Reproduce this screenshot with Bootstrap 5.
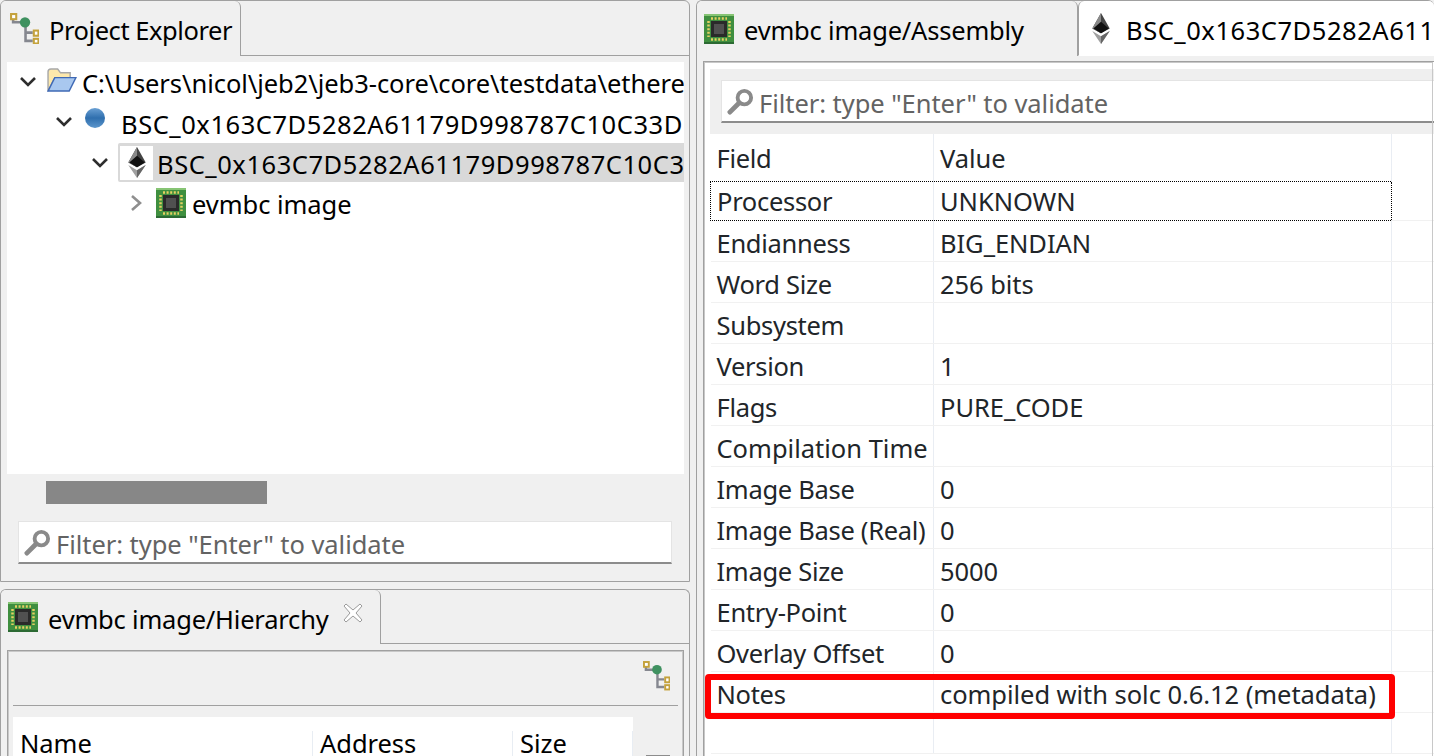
<!DOCTYPE html>
<html lang="en"><head><meta charset="utf-8"><title>JEB</title>
<link rel="stylesheet" href="https://cdn.jsdelivr.net/npm/bootstrap@5.3.0/dist/css/bootstrap.min.css">
<style>
html,body{height:756px;overflow:hidden}
body{font-family:"Noto Sans","Open Sans",sans-serif;font-size:25.5px;letter-spacing:-.05px;background:#f0f0f0;color:#000;line-height:1}
.shell{width:1434px;height:756px;overflow:hidden}
.leftcol{width:690px;flex:none}
.rightcol{width:738px;margin-left:6px;flex:none;overflow:hidden;height:756px}
.pane{border:1px solid #a0a0a0;border-radius:6px 6px 0 0;background:#f0f0f0;overflow:hidden}
.pane-top{height:582px}
.pane-low{height:167px;margin-top:7px;border-bottom:0}
.strip{height:55px;flex:none;border-bottom:1px solid #a0a0a0}
.pane-low .strip{height:54px}
.tabx{height:calc(100% + 1px);margin-bottom:-1px;border-right:1px solid #a0a0a0;background:#f0f0f0;border-radius:0 6px 0 0;white-space:nowrap;flex:none}
.tabx>span{padding-top:5px}
.tabx.act{background:#fff;border-bottom:1px solid #fff;border-radius:6px 6px 0 0;border-left:1px solid #a0a0a0;border-right:0}
.t1{width:240px;padding-left:9px;gap:10px}
.t1>span{letter-spacing:-.45px}
.t2{width:380px;padding-left:7px;gap:10px}
.t2>span,.t3>span{letter-spacing:-.2px}
.t3{width:381px;padding-left:7px;gap:10px}
.t4{width:360px;padding-left:12px;gap:15px;flex:none}
.hash{letter-spacing:.55px}
.body-top{padding:6px 5px 4px 6px;height:526px}
.treebox{background:#fff;height:412px;overflow:hidden;flex:none}
.trow{height:40.25px;white-space:nowrap;flex:none}
.trow span{padding-top:4px}
.r1{padding-left:12px;gap:9px}
.r1 .lbl{margin-left:-4px}
.folder{margin-bottom:4px}
.r2{padding-left:48px;gap:11px}
.r3{padding-left:84px}
.sel{background:#d9d9d9;border-radius:2px 0 0 2px;flex:1;height:39px;padding-left:2px;overflow:hidden;margin-left:9px}
.iconbox{background:#fff;width:33px;height:34px;flex:none;margin-right:4px}
.r4{padding-left:122px;gap:11px}
.r4 .chipi{margin-left:2px}
.r4 span{margin-left:-5px}
.hbar{height:36px;flex:none;padding:7px 0 0 39px}
.thumb{width:221px;height:23px;background:#878787}
.filter{background:#fff;border-bottom:2px solid #8c8c8c;border-top:1px solid #e4e4e4;border-left:1px solid #e4e4e4;border-right:1px solid #e4e4e4;height:43px;color:#636363;padding-left:5px;gap:5px;white-space:nowrap;overflow:hidden}
.filter span{padding-top:5px}
.fl{margin:11px 12px 0 11px}
.inner-low{margin:6px 5px 0 6px;border:1px solid #a0a0a0;height:120px;padding:0 5px;outline:1px solid #c8c8c8;outline-offset:-2px}
.tbar{height:55px;border-bottom:1px solid #a0a0a0;padding:9px 0 0 0;justify-content:flex-end}
.lowrow{margin-top:11px}
.hrow{background:#fff;height:40px;width:620px;padding-top:14px}
.hc{border-right:1px solid #e8edf3;height:100%;padding-left:7px;white-space:nowrap;flex:none}
.col-a{width:300px}.col-b{width:200px}.col-c{width:120px}
.sbarrow{width:24px;height:2px;background:#8c8c8c;margin:38px 0 0 13px;flex:none}
.inner-right{margin:5px 0 0 6px;border:1px solid #a0a0a0;outline:1px solid #c8c8c8;outline-offset:-2px;border-right:0;padding:7px 0 0 6px;background:#fff;height:700px;position:relative}
.fbar{background:#efefef;height:65px;padding:11px 0 10px 11px}
.fbar .filter{height:43px;padding-left:5px;border-right:0}
.ptable{width:726px;table-layout:fixed;margin:0;--bs-table-bg:transparent;border-collapse:collapse}
.ptable td{height:41px;padding:6px 0 0 6px;border:0;border-right:1px solid #e9edf3;border-bottom:1px solid #f1f1f1;vertical-align:middle;white-space:nowrap;line-height:1;box-shadow:none;overflow:hidden}
.ptable td:first-child{letter-spacing:-.3px}
.ptable td.plain{letter-spacing:0}
.ptable td:nth-child(3){border-right:0}
.ptable tr.hd td{height:47px;border-bottom:0;padding-top:3px}
.ptable tr.focusrow td{height:39px;padding-top:3px;border-top:1px dotted #000;border-bottom:1px dotted #000}
.ptable tr.focusrow td:first-child{border-left:1px dotted #000}
.ptable tr.focusrow td:nth-child(2){border-right:1px dotted #000}
.ptable tr.focusrow td:nth-child(3){border-top:0;border-bottom:1px solid #f1f1f1}
.c1{width:223px}.c2{width:458px}.c3{width:45px}
.redmark{position:absolute;left:1px;top:612px;width:690px;height:45px;border:6px solid #f00;border-radius:4px;pointer-events:none}
svg{flex:none;display:block}
.soft{filter:blur(.5px)}
</style></head><body>
<svg width="0" height="0" style="position:absolute"><defs>
<symbol id="chip" viewBox="0 0 30 30"><rect width="30" height="30" fill="#3f8f3f"/><rect width="30" height="2" fill="#86c474"/><rect y="28" width="30" height="2" fill="#2c6a33"/><path d="M7 4.500h16M7 25.500h16M4.500 7v16M25.500 7v16" stroke="#e6cf62" stroke-width="2.500" stroke-dasharray="2 1.600"/><rect x="7" y="7" width="16" height="16" fill="#2a2a2a"/><rect x="10" y="10" width="10" height="10" fill="#505050"/></symbol>
<symbol id="eth" viewBox="0 0 20 32"><path d="M10 0 19 16 10 21 1 16Z" fill="#444"/><path d="M10 0 1 16 10 21Z" fill="#8a8a8a"/><path d="M1 18.500 10 24 19 18.500 10 32Z" fill="#a0a0a0"/><path d="M10 24 19 18.500 10 32Z" fill="#666"/><path d="M10 9 18 16 10 21 2 16Z" fill="#111"/></symbol>
<symbol id="tree" viewBox="0 0 28 30"><path d="M3 6V9H14M15 9V27H22M15 19H22" fill="none" stroke="#85878f" stroke-width="2.500"/><rect x="1" y="1" width="5" height="5" fill="#fff" stroke="#c4a23c" stroke-width="2"/><rect x="23" y="17" width="4.500" height="5" fill="#fff" stroke="#c4a23c" stroke-width="2"/><rect x="23" y="25" width="4.500" height="4.500" fill="#fff" stroke="#c4a23c" stroke-width="2"/><circle cx="14.500" cy="9" r="5" fill="#3f9160"/></symbol>
<symbol id="lens" viewBox="0 0 28 28"><path d="M3 25 13 15" stroke="#8a8a8a" stroke-width="5" stroke-linecap="round"/><circle cx="18" cy="10" r="7" fill="#fff" stroke="#8a8a8a" stroke-width="4"/></symbol>
<symbol id="down" viewBox="0 0 18 12"><path d="M2 2 9 9 16 2" fill="none" stroke="#2e2e2e" stroke-width="2.600"/></symbol>
</defs></svg>
<div class="shell d-flex">
 <div class="leftcol d-flex flex-column">
  <div class="pane pane-top d-flex flex-column">
   <div class="strip d-flex">
    <div class="tabx t1 d-flex align-items-center"><svg width="29" height="31"><use href="#tree"/></svg><span>Project Explorer</span></div>
   </div>
   <div class="body-top d-flex flex-column">
    <div class="treebox d-flex flex-column">
     <div class="trow r1 d-flex align-items-center"><svg width="18" height="12"><use href="#down"/></svg><svg class="folder" width="31" height="25" viewBox="0 0 32 26"><path d="M2 24V4Q2 1 5 1H12L15 5H25V10H9L2 24Z" fill="#fce8ac" stroke="#a8a8a8" stroke-width="1.500"/><path d="M2 24 9 10H31L24 24Z" fill="#a9c8ef" stroke="#3f69b5" stroke-width="1.500"/></svg><span class="lbl">C:\Users\nicol\jeb2\jeb3-core\core\testdata\ethereum\bsc</span></div>
     <div class="trow r2 d-flex align-items-center"><svg width="18" height="12"><use href="#down"/></svg><svg width="22" height="22" viewBox="0 0 22 22" class="mb-2"><defs><linearGradient id="bl" x1="0" y1="0" x2="0" y2="1"><stop offset="0" stop-color="#6aa0d4"/><stop offset=".5" stop-color="#2f6fae"/><stop offset="1" stop-color="#5c96cc"/></linearGradient></defs><circle cx="11" cy="11" r="10" fill="url(#bl)"/></svg><span class="ms-1 hash">BSC_0x163C7D5282A61179D998787C10C33DE71B0F4E9</span></div>
     <div class="trow r3 d-flex align-items-center"><svg width="18" height="12"><use href="#down"/></svg><div class="sel d-flex align-items-center"><div class="iconbox d-flex align-items-center justify-content-center"><svg class="soft" width="20" height="31"><use href="#eth"/></svg></div><span class="hash">BSC_0x163C7D5282A61179D998787C10C33DE71B0F4E9</span></div></div>
     <div class="trow r4 d-flex align-items-center"><svg width="14" height="18" viewBox="0 0 14 18"><path d="M3 2 11 9 3 16" fill="none" stroke="#8f8f8f" stroke-width="2.600"/></svg><svg class="chipi" width="30" height="30"><use href="#chip"/></svg><span>evmbc image</span></div>
    </div>
    <div class="hbar"><div class="thumb"></div></div>
    <div class="filter d-flex align-items-center fl"><svg width="27" height="27"><use href="#lens"/></svg><span>Filter: type "Enter" to validate</span></div>
   </div>
  </div>
  <div class="pane pane-low d-flex flex-column">
   <div class="strip d-flex">
    <div class="tabx t2 d-flex align-items-center"><svg width="30" height="30"><use href="#chip"/></svg><span>evmbc image/Hierarchy</span><svg width="20" height="20" viewBox="0 0 20 20" class="ms-1 mb-2"><path d="M3 1 10 7 17 1 19 3 13 10 19 17 17 19 10 13 3 19 1 17 7 10 1 3Z" fill="#fff" stroke="#9a9a9a"/></svg></div>
   </div>
   <div class="inner-low">
    <div class="tbar d-flex"><svg width="27" height="31" class="me-2"><use href="#tree"/></svg></div>
    <div class="lowrow d-flex"><div class="hrow d-flex"><div class="hc col-a">Name</div><div class="hc col-b">Address</div><div class="hc col-c">Size</div></div><div class="sbarrow"></div></div>
   </div>
  </div>
 </div>
 <div class="rightcol">
  <div class="pane" style="height:757px;border-right:0;border-bottom:0">
   <div class="strip d-flex">
    <div class="tabx t3 d-flex align-items-center"><svg width="30" height="30"><use href="#chip"/></svg><span>evmbc image/Assembly</span></div>
    <div class="tabx act t4 d-flex align-items-center"><svg class="soft" width="20" height="31"><use href="#eth"/></svg><span class="hash">BSC_0x163C7D5282A61179D998787C10C33DE71B0F4E9</span></div>
   </div>
   <div class="inner-right">
    <div class="fbar"><div class="filter d-flex align-items-center"><svg width="27" height="27"><use href="#lens"/></svg><span>Filter: type "Enter" to validate</span></div></div>
    <table class="table ptable"><colgroup><col class="c1"><col class="c2"><col class="c3"></colgroup><tbody>
     <tr class="hd"><td>Field</td><td>Value</td><td></td></tr>
     <tr class="focusrow"><td>Processor</td><td>UNKNOWN</td><td></td></tr>
     <tr><td>Endianness</td><td>BIG_ENDIAN</td><td></td></tr>
     <tr><td>Word Size</td><td>256 bits</td><td></td></tr>
     <tr><td>Subsystem</td><td></td><td></td></tr>
     <tr><td>Version</td><td>1</td><td></td></tr>
     <tr><td>Flags</td><td>PURE_CODE</td><td></td></tr>
     <tr><td class="plain">Compilation Time</td><td></td><td></td></tr>
     <tr><td>Image Base</td><td>0</td><td></td></tr>
     <tr><td>Image Base (Real)</td><td>0</td><td></td></tr>
     <tr><td>Image Size</td><td>5000</td><td></td></tr>
     <tr><td>Entry-Point</td><td>0</td><td></td></tr>
     <tr><td>Overlay Offset</td><td>0</td><td></td></tr>
     <tr><td>Notes</td><td>compiled with solc 0.6.12 (metadata)</td><td></td></tr>
     <tr><td>&nbsp;</td><td></td><td></td></tr>
    </tbody></table>
    <div class="redmark"></div>
   </div>
  </div>
 </div>
</div>
<script src="https://cdn.jsdelivr.net/npm/bootstrap@5.3.0/dist/js/bootstrap.bundle.min.js"></script>
</body></html>
